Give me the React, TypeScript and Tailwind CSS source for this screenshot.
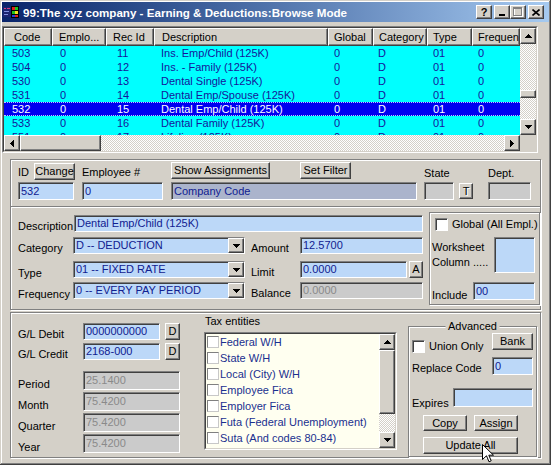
import React from "react";

// Win2000 classic bevels
const raised =
  "bg-[#d4d0c8] border border-t-white border-l-white border-r-[#404040] border-b-[#404040] shadow-[inset_-1px_-1px_#808080]";
const sunken =
  "border border-t-[#808080] border-l-[#808080] border-r-white border-b-white shadow-[inset_1px_1px_#404040]";
const etched = "border border-[#808080] shadow-[inset_1px_1px_#ffffff,1px_1px_#ffffff]";
const dither =
  "bg-[image:repeating-conic-gradient(#ffffff_0%_25%,#d4d0c8_0%_50%)] bg-[length:2px_2px]";

const tones = {
  blue: "bg-[#bcd8f8] text-[#102090]",
  code: "bg-[#abb4cc] text-[#102090]",
  gray: "bg-[#cbcbcb] text-[#8a8a8a]",
};

type Dir = "up" | "down" | "left" | "right";

function Arrow({ dir }: { dir: Dir }) {
  const bars = [0, 1, 2, 3];
  if (dir === "up" || dir === "down") {
    return (
      <svg width="7" height="4" viewBox="0 0 7 4">
        {bars.map((i) => (
          <rect key={i} x={3 - i} y={dir === "up" ? i : 3 - i} width={2 * i + 1} height="1" fill="#000" />
        ))}
      </svg>
    );
  }
  return (
    <svg width="4" height="7" viewBox="0 0 4 7">
      {bars.map((i) => (
        <rect key={i} x={dir === "left" ? i : 3 - i} y={3 - i} width="1" height={2 * i + 1} fill="#000" />
      ))}
    </svg>
  );
}

function ArrowBtn({ dir }: { dir: Dir }) {
  return (
    <div className={`${raised} w-[16px] h-[16px] shrink-0 flex items-center justify-center`}>
      <Arrow dir={dir} />
    </div>
  );
}

function Btn({ className = "", children }: { className?: string; children?: React.ReactNode }) {
  return (
    <button type="button" className={`${raised} shrink-0 flex items-center justify-center leading-none text-black ${className}`}>
      {children}
    </button>
  );
}

function Field({
  className = "",
  tone = "blue",
  children,
}: {
  className?: string;
  tone?: keyof typeof tones;
  children?: React.ReactNode;
}) {
  return (
    <div className={`${sunken} ${tones[tone]} shrink-0 flex items-center pl-[2px] overflow-hidden ${className}`}>
      {children}
    </div>
  );
}

function Select({ children }: { children: React.ReactNode }) {
  return (
    <div className={`${sunken} ${tones.blue} w-[172px] shrink-0 flex items-center pl-[2px]`}>
      <span className="flex-1 overflow-hidden">{children}</span>
      <div className={`${raised} w-[16px] h-full flex items-center justify-center`}>
        <Arrow dir="down" />
      </div>
    </div>
  );
}

const cols = [
  { label: "Code", w: "w-[48px]", hp: "pl-[9px]", cp: "pl-[8px]" },
  { label: "Emplo...", w: "w-[54px]", hp: "pl-[6px]", cp: "pl-[8px]" },
  { label: "Rec Id", w: "w-[48px]", hp: "pl-[6px]", cp: "pl-[11px]" },
  { label: "Description", w: "w-[174px]", hp: "pl-[7px]", cp: "pl-[7px]" },
  { label: "Global", w: "w-[45px]", hp: "pl-[5px]", cp: "pl-[6px]" },
  { label: "Category", w: "w-[54px]", hp: "pl-[5px]", cp: "pl-[5px]" },
  { label: "Type", w: "w-[45px]", hp: "pl-[5px]", cp: "pl-[6px]" },
  { label: "Frequency", w: "w-[48px]", hp: "pl-[5px]", cp: "pl-[6px]" },
];

const rows = [
  ["503", "0", "11", "Ins. Emp/Child (125K)", "0", "D", "01", "0"],
  ["504", "0", "12", "Ins. - Family (125K)", "0", "D", "01", "0"],
  ["530", "0", "13", "Dental Single (125K)", "0", "D", "01", "0"],
  ["531", "0", "14", "Dental Emp/Spouse (125K)", "0", "D", "01", "0"],
  ["532", "0", "15", "Dental Emp/Child (125K)", "0", "D", "01", "0"],
  ["533", "0", "16", "Dental Family (125K)", "0", "D", "01", "0"],
  ["551", "0", "17", "Lifeline (125K)", "0", "D", "01", "0"],
];

const taxes = [
  "Federal W/H",
  "State W/H",
  "Local (City) W/H",
  "Employee Fica",
  "Employer Fica",
  "Futa (Federal Unemployment)",
  "Suta (And codes 80-84)",
];

function AppIcon() {
  return (
    <svg width="16" height="16" viewBox="0 0 16 16" className="shrink-0">
      <rect x="0" y="3" width="8" height="10" fill="#1c2470" />
      <rect x="1" y="4" width="2" height="1" fill="#d04080" />
      <rect x="4" y="4" width="3" height="1" fill="#d04080" />
      <rect x="1" y="7" width="5" height="1" fill="#8090e0" />
      <rect x="1" y="10" width="4" height="1" fill="#8090e0" />
      <rect x="8" y="2" width="8" height="12" fill="#000" />
      <rect x="9" y="3" width="3" height="3" fill="#e02020" />
      <rect x="12" y="3" width="3" height="3" fill="#20c020" />
      <rect x="9" y="7" width="3" height="3" fill="#20c020" />
      <rect x="12" y="7" width="3" height="3" fill="#f0e020" />
      <rect x="9" y="11" width="3" height="2" fill="#2040e0" />
      <rect x="12" y="11" width="3" height="2" fill="#e02020" />
    </svg>
  );
}

function TitleBar() {
  return (
    <div className="h-[20px] flex items-center bg-linear-to-r from-[#0a246a] to-[#a6caf0] pl-[1px] pr-[5px]">
      <AppIcon />
      <span className="ml-[4px] text-white font-bold text-[11.6px]">
        99:The xyz company - Earning &amp; Deductions:Browse Mode
      </span>
      <div className="ml-auto flex">
        <div className={`${raised} w-[16px] h-[14px] flex items-center justify-center font-bold text-[11px]`}>?</div>
        <div className={`${raised} ml-[2px] w-[16px] h-[14px] flex items-end justify-center pb-[2px]`}>
          <div className="w-[6px] h-[2px] bg-black" />
        </div>
        <div className={`${raised} w-[16px] h-[14px] flex items-center justify-center`}>
          <svg width="10" height="10" viewBox="0 0 10 10">
            <rect x="1.5" y="1.5" width="8" height="8" fill="none" stroke="#ffffff" />
            <rect x="0.5" y="0.5" width="8" height="8" fill="none" stroke="#808080" />
            <rect x="0" y="1" width="9" height="1" fill="#808080" />
          </svg>
        </div>
        <div className={`${raised} ml-[2px] w-[16px] h-[14px] flex items-center justify-center`}>
          <svg width="8" height="7" viewBox="0 0 8 7">
            <path d="M0.5 0.5 L7.5 6.5 M7.5 0.5 L0.5 6.5" stroke="#000" strokeWidth="1.6" />
          </svg>
        </div>
      </div>
    </div>
  );
}

function Grid() {
  return (
    <div className="mt-[4px] w-[536px] border border-t-[#808080] border-l-[#808080] border-r-white border-b-white">
      <div className="border border-t-[#404040] border-l-[#404040] border-r-[#d4d0c8] border-b-[#d4d0c8]">
        <div className="flex h-[107px]">
          <div className="w-[516px] overflow-hidden">
            <div className="flex h-[18px]">
              {cols.map((c) => (
                <div key={c.label} className={`${raised} ${c.w} ${c.hp} shrink-0 h-full flex items-center overflow-hidden`}>
                  {c.label}
                </div>
              ))}
            </div>
            {rows.map((r, i) => (
              <div
                key={r[0]}
                className={`flex h-[14px] items-center ${
                  i === 4
                    ? "bg-[#0000f0] text-white border-y border-dotted border-[#c0c0ff]"
                    : "bg-[#00ffff] text-[#15159a]"
                }`}
              >
                {r.map((v, j) => (
                  <div key={j} className={`${cols[j].w} ${cols[j].cp} shrink-0 overflow-hidden`}>
                    {v}
                  </div>
                ))}
              </div>
            ))}
          </div>
          <div className="w-[16px] flex flex-col">
            <ArrowBtn dir="up" />
            <div className={`${dither} h-[46px]`} />
            <div className={`${raised} h-[8px]`} />
            <div className={`${dither} flex-1`} />
            <ArrowBtn dir="down" />
          </div>
        </div>
        <div className="flex h-[16px]">
          <ArrowBtn dir="left" />
          <div className={`${raised} w-[81px]`} />
          <div className={`${dither} flex-1`} />
          <ArrowBtn dir="right" />
          <div className="w-[16px]" />
        </div>
      </div>
    </div>
  );
}

function UpperPanel() {
  return (
    <div className={`${etched} mt-[6px] ml-[8px] w-[531px] h-[151px]`}>
      <div className="flex items-center h-[19px] mt-[2px] pl-[7px]">
        <span className="w-[16px] mt-[2px]">ID</span>
        <Btn className="w-[41px] h-[17px]">Change</Btn>
        <span className="ml-[7px] w-[89px] mt-[2px]">Employee #</span>
        <Btn className="w-[99px] h-[17px] mb-[3px]">Show Assignments</Btn>
        <Btn className="ml-[30px] w-[51px] h-[17px] mb-[2px]">Set Filter</Btn>
        <span className="ml-[73px] w-[64px] mt-[4px]">State</span>
        <span className="mt-[4px]">Dept.</span>
      </div>
      <div className="flex h-[18px] mt-[1px] pl-[7px]">
        <Field className="w-[56px]">532</Field>
        <Field className="ml-[8px] w-[81px]">0</Field>
        <Field tone="code" className="ml-[8px] w-[246px]">
          Company Code
        </Field>
        <Field tone="gray" className="ml-[7px] w-[30px]" />
        <Btn className="ml-[5px] w-[14px] h-[16px] self-center text-[#808080] [text-shadow:1px_1px_#ffffff]">T</Btn>
        <Field tone="gray" className="ml-[15px] w-[43px]" />
      </div>
      <div className="mt-[6px] h-[2px] border-t border-t-[#808080] border-b border-b-white" />
      <div className="flex">
        <div className="pl-[7px] w-[412px]">
          <div className="mt-[7px] flex h-[17px]">
            <span className="w-[56px] self-center mt-[5px]">Description</span>
            <Field className="w-[349px]">Dental Emp/Child (125K)</Field>
          </div>
          <div className="mt-[5px] flex h-[17px]">
            <span className="w-[55px] self-center mt-[6px]">Category</span>
            <Select>D -- DEDUCTION</Select>
            <span className="ml-[6px] w-[49px] self-center mt-[6px]">Amount</span>
            <Field className="w-[123px]">12.5700</Field>
          </div>
          <div className="mt-[7px] flex h-[17px]">
            <span className="w-[55px] self-center mt-[7px]">Type</span>
            <Select>01 -- FIXED RATE</Select>
            <span className="ml-[6px] w-[49px] self-center mt-[6px]">Limit</span>
            <Field className="w-[107px]">0.0000</Field>
            <Btn className="ml-[2px] w-[14px] h-[17px]">A</Btn>
          </div>
          <div className="mt-[4px] flex h-[17px]">
            <span className="w-[55px] self-center mt-[7px]">Frequency</span>
            <Select>0 -- EVERY PAY PERIOD</Select>
            <span className="ml-[6px] w-[49px] self-center mt-[6px]">Balance</span>
            <Field tone="gray" className="w-[123px]">
              0.0000
            </Field>
          </div>
        </div>
        <div className={`${etched} ml-[6px] mt-[4px] w-[111px] h-[93px]`}>
          <div className="mt-[5px] pl-[5px] flex items-center h-[13px]">
            <div className={`${sunken} bg-white w-[13px] h-[13px] shrink-0`} />
            <span className="ml-[4px]">Global (All Empl.)</span>
          </div>
          <div className="mt-[6px] flex pl-[2px] pr-[4px] h-[36px]">
            <div className="pt-[3px] leading-[15px]">
              Worksheet
              <br />
              Column .....
            </div>
            <Field className="ml-auto w-[41px]" />
          </div>
          <div className="mt-[9px] flex pl-[2px] pr-[4px] h-[18px]">
            <span className="self-center mt-[8px]">Include</span>
            <Field className="ml-auto w-[62px]">00</Field>
          </div>
        </div>
      </div>
    </div>
  );
}

function LowerPanel() {
  const totals = [
    ["Period", "25.1400"],
    ["Month", "75.4200"],
    ["Quarter", "75.4200"],
    ["Year", "75.4200"],
  ];
  return (
    <div className={`${etched} mt-[2px] ml-[8px] w-[531px] h-[146px] flex`}>
      <div className="w-[169px] pl-[7px] pt-[10px]">
        <div className="flex h-[17px]">
          <span className="w-[65px] self-center mt-[5px]">G/L Debit</span>
          <Field className="w-[77px]">0000000000</Field>
          <Btn className="ml-[5px] w-[15px] h-[17px]">D</Btn>
        </div>
        <div className="mt-[3px] flex h-[17px]">
          <span className="w-[65px] self-center mt-[6px]">G/L Credit</span>
          <Field className="w-[77px]">2168-000</Field>
          <Btn className="ml-[5px] w-[15px] h-[17px]">D</Btn>
        </div>
        {totals.map(([label, value], i) => (
          <div key={label} className={`${i === 0 ? "mt-[11px]" : "mt-[2px]"} flex h-[19px]`}>
            <span className="w-[65px] self-center mt-[8px]">{label}</span>
            <Field tone="gray" className="w-[97px]">
              {value}
            </Field>
          </div>
        ))}
      </div>

      <div className="ml-[24px] w-[193px]">
        <div className="mt-[2px] pl-[1px] h-[13px]">Tax entities</div>
        <div className="mt-[4px] h-[118px] border border-t-[#808080] border-l-[#808080] border-r-white border-b-white">
          <div className="h-full flex border border-t-[#404040] border-l-[#404040] border-r-[#d4d0c8] border-b-[#d4d0c8]">
            <div className="flex-1 bg-[#fffff0]">
              {taxes.map((t) => (
                <div key={t} className="h-[16px] flex items-center">
                  <div className="ml-[1px] w-[12px] h-[12px] shrink-0 border border-t-[#808080] border-l-[#808080] border-r-[#c8c8c8] border-b-[#c8c8c8] bg-white" />
                  <span className="ml-[1px] text-[#1a2f8f]">{t}</span>
                </div>
              ))}
            </div>
            <div className="w-[16px] flex flex-col">
              <ArrowBtn dir="up" />
              <div className={`${raised} h-[64px]`} />
              <div className={`${dither} flex-1`} />
              <ArrowBtn dir="down" />
            </div>
          </div>
        </div>
      </div>

      <div className={`${etched} relative ml-[11px] mt-[13px] w-[129px] h-[131px]`}>
        <span className="absolute left-1/2 -translate-x-1/2 -top-[7px] bg-[#d4d0c8] px-[3px] leading-[13px]">
          Advanced
        </span>
        <div className="mt-[6px] flex h-[20px] px-[3px]">
          <div className={`${sunken} bg-white w-[13px] h-[13px] self-end shrink-0`} />
          <span className="ml-[4px] self-end leading-[13px]">Union Only</span>
          <Btn className="ml-auto w-[41px] h-[17px]">Bank</Btn>
        </div>
        <div className="mt-[4px] flex h-[18px] px-[3px]">
          <span className="self-center mt-[4px]">Replace Code</span>
          <Field className="ml-auto w-[41px]">0</Field>
        </div>
        <div className="mt-[13px] flex h-[19px] px-[3px]">
          <span className="self-center mt-[11px]">Expires</span>
          <Field className="ml-auto w-[80px]" />
        </div>
        <div className="mt-[8px] flex h-[16px] pl-[14px]">
          <Btn className="w-[44px] h-[16px]">Copy</Btn>
          <Btn className="ml-[7px] w-[44px] h-[16px]">Assign</Btn>
        </div>
        <div className="mt-[6px] pl-[14px]">
          <Btn className="w-[95px] h-[17px]">Update All</Btn>
        </div>
      </div>
    </div>
  );
}

function Cursor() {
  return (
    <svg className="absolute left-[482px] top-[444px]" width="13" height="20" viewBox="0 0 13 20">
      <path d="M0.5 0.5 V15.5 L4.5 11.8 L7 17.8 L9.2 16.8 L6.8 11.2 H11.5 Z" fill="#ffffff" stroke="#000000" strokeWidth="1" />
    </svg>
  );
}

export default function App() {
  return (
    <div className="relative w-[551px] h-[465px] overflow-hidden whitespace-nowrap bg-[#d4d0c8] p-[2px] font-['Liberation_Sans',Arial,sans-serif] text-[11px] leading-[13px] text-black shadow-[inset_-1px_-1px_#404040,inset_1px_1px_#d4d0c8,inset_-2px_-2px_#808080,inset_2px_2px_#ffffff]">
      <TitleBar />
      <Grid />
      <UpperPanel />
      <LowerPanel />
      <Cursor />
    </div>
  );
}
